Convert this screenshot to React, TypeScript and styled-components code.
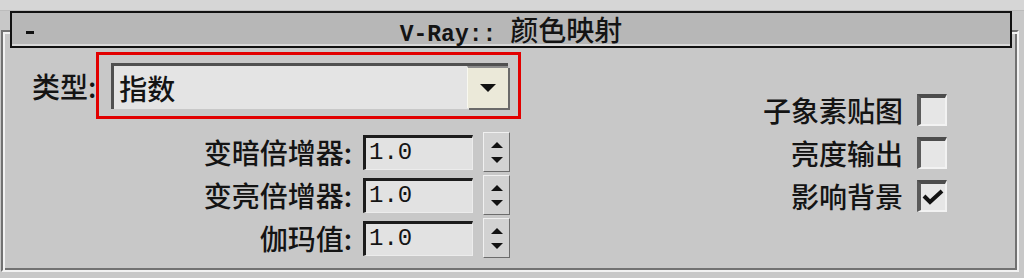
import React from "react";
import styled, { createGlobalStyle } from "styled-components";

const GlobalStyle = createGlobalStyle`
  html, body {
    margin: 0;
    padding: 0;
    background: #c8c8c8;
  }
  body {
    width: 1024px;
    height: 278px;
    overflow: hidden;
    font-family: "Noto Sans CJK SC", "Liberation Sans", sans-serif;
    color: #141414;
  }
`;

const cjk = `"Noto Sans CJK SC", "Liberation Sans", sans-serif`;
const mono = `"Liberation Mono", "DejaVu Sans Mono", monospace`;

const TopStrip = styled.div`
  height: 10px;
  background: #d6d6d6;
  border-bottom: 1px solid #bcbcbc;
`;

const Panel = styled.div`
  margin: 19px 5px 0 1px;
  height: 238px;
  border: 2px solid;
  border-color: #727272 #f2f2f2 #f2f2f2 #727272;
  box-shadow: inset 2px 2px 0 #f2f2f2, inset -2px -2px 0 #727272;
  padding: 0 2px;
`;

const TitleBar = styled.div`
  margin: -21px 3px 0 5px;
  height: 33px;
  border: 2px solid #111;
  background: #b7b7b7;
  box-shadow: inset 0 -2px 0 #d8d8d8;
  display: grid;
  grid-template-columns: 1fr auto 1fr;
  align-items: center;
  padding: 0 14px;
`;

const Collapse = styled.span`
  width: 8px;
  height: 3px;
  margin-top: 3px;
  background: #111;
`;

const Title = styled.span`
  display: flex;
  align-items: baseline;
  gap: 14px;
  white-space: nowrap;
`;

const TitleMono = styled.span`
  font-family: ${mono};
  font-size: 23px;
  font-weight: bold;
`;

const TitleCjk = styled.span`
  font-family: ${cjk};
  font-size: 28px;
  line-height: 33px;
  font-weight: 500;
`;

const Body = styled.div`
  display: flex;
  justify-content: space-between;
  padding: 4px 68px 0 0;
`;

const LeftColumn = styled.div`
  display: flex;
  flex-direction: column;
`;

const TypeRow = styled.div`
  display: flex;
  align-items: center;
  padding-left: 27px;
`;

const Label = styled.span`
  font-family: ${cjk};
  font-size: 28px;
  line-height: 32px;
  white-space: nowrap;
  font-weight: 500;
`;

const Highlight = styled.div`
  width: 397px;
  height: 46px;
  border: 3px solid #e20000;
  padding: 8px 10px 7px 12px;
`;

const Dropdown = styled.div`
  height: 46px;
  display: flex;
  align-items: center;
  background: #e4e4e4;
  border-top: 3px solid #505050;
  border-left: 3px solid #505050;
  box-sizing: border-box;
  padding-left: 5px;
`;

const DropText = styled.span`
  flex: 1;
  font-family: ${cjk};
  font-size: 28px;
  line-height: 40px;
  font-weight: 500;
`;

const DropButton = styled.div`
  width: 40px;
  height: 40px;
  margin-top: -2px;
  background: #ebe9d9;
  border-top: 2px solid #8c8c8c;
  border-left: 1px solid #f8f8f0;
  box-shadow: 2px 2px 0 #6a6a6a;
  display: flex;
  align-items: center;
  justify-content: center;
`;

const ArrowDown = styled.span<{ size: number }>`
  width: 0;
  height: 0;
  border-left: ${({ size }) => size}px solid transparent;
  border-right: ${({ size }) => size}px solid transparent;
  border-top: ${({ size }) => size}px solid #111;
`;

const ArrowUp = styled.span<{ size: number }>`
  width: 0;
  height: 0;
  border-left: ${({ size }) => size}px solid transparent;
  border-right: ${({ size }) => size}px solid transparent;
  border-bottom: ${({ size }) => size}px solid #111;
`;

const SpinGrid = styled.div`
  display: grid;
  grid-template-columns: 347px 110px 26px;
  grid-auto-rows: 40px;
  column-gap: 11px;
  row-gap: 3px;
  margin-top: 13px;
  align-items: center;
`;

const SpinLabel = styled(Label)`
  justify-self: end;
`;

const NumberField = styled.div`
  height: 35px;
  box-sizing: border-box;
  background: #e2e2e2;
  border-top: 3px solid #1c1c1c;
  border-left: 3px solid #1c1c1c;
  border-right: 1px solid #ececec;
  border-bottom: 1px solid #ececec;
  font-family: ${mono};
  font-size: 24px;
  line-height: 30px;
  padding-left: 3px;
`;

const Spinner = styled.div`
  height: 40px;
  box-sizing: border-box;
  margin-left: -1px;
  background: #d2d2d2;
  border: 1px solid;
  border-color: #f0f0f0 #6c6c6c #6c6c6c #f0f0f0;
  display: flex;
  flex-direction: column;
  justify-content: space-around;
  align-items: center;
  padding: 4px 0;
`;

const RightColumn = styled.div`
  display: flex;
  flex-direction: column;
  align-items: flex-end;
  gap: 11px;
  margin-top: 42px;
`;

const CheckRow = styled.div`
  display: flex;
  align-items: center;
  gap: 14px;
`;

const CheckBox = styled.div`
  width: 30px;
  height: 32px;
  box-sizing: border-box;
  background: #e6e6e6;
  border-top: 4px solid #4c4c4c;
  border-left: 4px solid #5a5a5a;
  border-right: 2px solid #f2f2f2;
  border-bottom: 2px solid #f2f2f2;
  display: flex;
  align-items: center;
  justify-content: center;
`;

const spinRows = ["变暗倍增器:", "变亮倍增器:", "伽玛值:"];
const checks = [
  { label: "子象素贴图", on: false },
  { label: "亮度输出", on: false },
  { label: "影响背景", on: true },
];

export default function App() {
  return (
    <>
      <GlobalStyle />
      <TopStrip />
      <Panel>
        <TitleBar>
          <Collapse />
          <Title>
            <TitleMono>V-Ray::</TitleMono>
            <TitleCjk>颜色映射</TitleCjk>
          </Title>
          <span />
        </TitleBar>
        <Body>
          <LeftColumn>
            <TypeRow>
              <Label>类型:</Label>
              <Highlight>
                <Dropdown>
                  <DropText>指数</DropText>
                  <DropButton>
                    <ArrowDown size={8} />
                  </DropButton>
                </Dropdown>
              </Highlight>
            </TypeRow>
            <SpinGrid>
              {spinRows.map((label) => (
                <React.Fragment key={label}>
                  <SpinLabel>{label}</SpinLabel>
                  <NumberField>1.0</NumberField>
                  <Spinner>
                    <ArrowUp size={6} />
                    <ArrowDown size={6} />
                  </Spinner>
                </React.Fragment>
              ))}
            </SpinGrid>
          </LeftColumn>
          <RightColumn>
            {checks.map((c) => (
              <CheckRow key={c.label}>
                <Label>{c.label}</Label>
                <CheckBox>
                  {c.on && (
                    <svg width="22" height="16" viewBox="0 0 22 16">
                      <path
                        d="M2 7 L8 13 L20 2"
                        fill="none"
                        stroke="#111"
                        strokeWidth="4"
                      />
                    </svg>
                  )}
                </CheckBox>
              </CheckRow>
            ))}
          </RightColumn>
        </Body>
      </Panel>
    </>
  );
}
